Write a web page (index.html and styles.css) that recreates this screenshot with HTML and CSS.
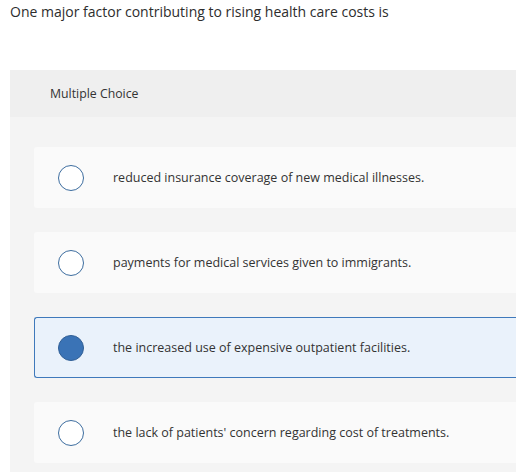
FILE: index.html
```html
<!DOCTYPE html>
<html>
<head>
<meta charset="utf-8">
<link rel="stylesheet" href="styles.css">
</head>
<body>
<p class="prompt">One major factor contributing to rising health care costs is</p>
<section class="panel">
  <header class="panel-head">Multiple Choice</header>
  <div class="choices">
    <div class="choice"><span class="radio"></span><span class="label">reduced insurance coverage of new medical illnesses.</span></div>
    <div class="choice"><span class="radio"></span><span class="label">payments for medical services given to immigrants.</span></div>
    <div class="choice selected"><span class="radio"></span><span class="label">the increased use of expensive outpatient facilities.</span></div>
    <div class="choice"><span class="radio"></span><span class="label">the lack of patients' concern regarding cost of treatments.</span></div>
  </div>
</section>
</body>
</html>
```
FILE: styles.css
```css
html, body { overflow: hidden; }
body {
  margin: 0;
  padding: 0 0 0 10px;
  background: #fff;
  font-family: "Open Sans", "Liberation Sans", sans-serif;
  color: #333;
}
.prompt {
  margin: 0;
  padding-top: 2px;
  height: 68px;
  font-size: 14px;
  line-height: 19px;
  color: #2d2d2d;
}
.panel {
  background: #f4f4f4;
}
.panel-head {
  background: #efefef;
  height: 47px;
  display: flex;
  align-items: center;
  padding-left: 40px;
  font-size: 12.3px;
  color: #333;
}
.choices {
  display: flex;
  flex-direction: column;
  gap: 24px;
  padding: 30px 0 9px 24px;
}
.choice {
  height: 61px;
  background: #fafafa;
  border-radius: 3px 0 0 3px;
  display: flex;
  align-items: center;
  box-sizing: border-box;
  border: 1px solid transparent;
  border-right: none;
  padding-left: 23px;
}
.choice.selected {
  background: #eaf2fb;
  border-color: #3f79bb;
}
.radio {
  width: 26px;
  height: 26px;
  box-sizing: border-box;
  border: 1.5px solid #3d6d9f;
  border-radius: 50%;
  background: #fff;
  flex: none;
}
.selected .radio {
  background: #3a73b6;
  border-color: #305f96;
}
.label {
  margin-left: 29px;
  font-size: 12.5px;
  color: #333;
}
```
